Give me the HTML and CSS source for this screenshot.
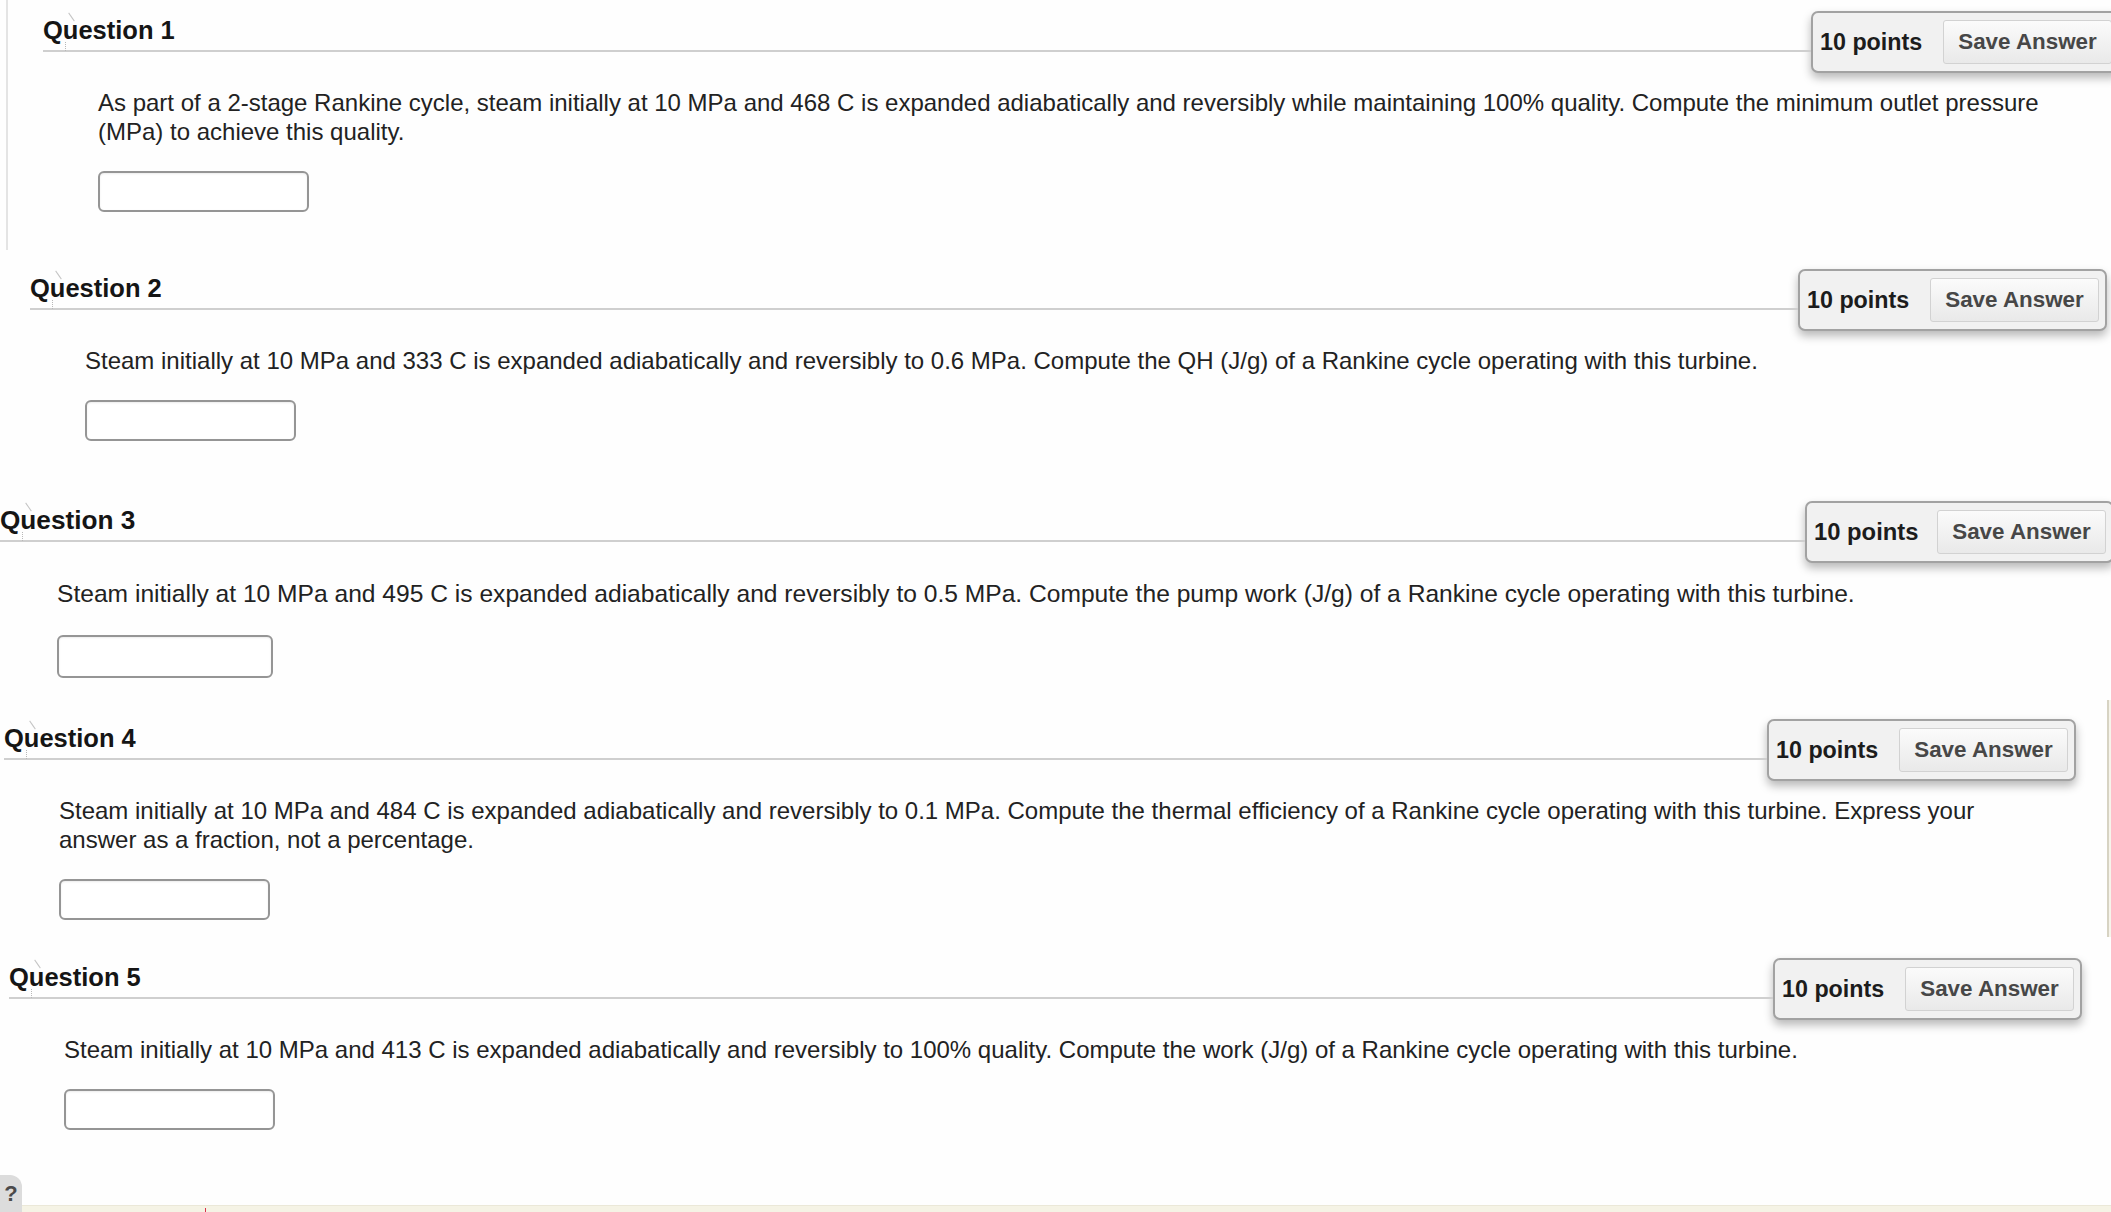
FILE: index.html
```html
<!DOCTYPE html>
<html lang="en">
<head>
<meta charset="utf-8">
<title>Quiz – Rankine cycle</title>
<link rel="stylesheet" href="styles.css">
</head>
<body>
<main class="quiz">
  <section class="question q1">
    <div class="q-head">
      <h3 class="q-title">Question 1</h3>
      <div class="points-box"><span class="points">10 points</span><button class="save" type="button">Save Answer</button></div>
    </div>
    <div class="q-body">
      <p class="q-text">As part of a 2-stage Rankine cycle, steam initially at 10 MPa and 468 C is expanded adiabatically and reversibly while maintaining 100% quality. Compute the minimum outlet pressure (MPa) to achieve this quality.</p>
      <input class="answer" type="text">
    </div>
  </section>

  <section class="question q2">
    <div class="q-head">
      <h3 class="q-title">Question 2</h3>
      <div class="points-box"><span class="points">10 points</span><button class="save" type="button">Save Answer</button></div>
    </div>
    <div class="q-body">
      <p class="q-text">Steam initially at 10 MPa and 333 C is expanded adiabatically and reversibly to 0.6 MPa. Compute the QH (J/g) of a Rankine cycle operating with this turbine.</p>
      <input class="answer" type="text">
    </div>
  </section>

  <section class="question q3">
    <div class="q-head">
      <h3 class="q-title">Question 3</h3>
      <div class="points-box"><span class="points">10 points</span><button class="save" type="button">Save Answer</button></div>
    </div>
    <div class="q-body">
      <p class="q-text">Steam initially at 10 MPa and 495 C is expanded adiabatically and reversibly to 0.5 MPa. Compute the pump work (J/g) of a Rankine cycle operating with this turbine.</p>
      <input class="answer" type="text">
    </div>
  </section>

  <section class="question q4">
    <div class="q-head">
      <h3 class="q-title">Question 4</h3>
      <div class="points-box"><span class="points">10 points</span><button class="save" type="button">Save Answer</button></div>
    </div>
    <div class="q-body">
      <p class="q-text">Steam initially at 10 MPa and 484 C is expanded adiabatically and reversibly to 0.1 MPa. Compute the thermal efficiency of a Rankine cycle operating with this turbine. Express your answer as a fraction, not a percentage.</p>
      <input class="answer" type="text">
    </div>
  </section>

  <section class="question q5">
    <div class="q-head">
      <h3 class="q-title">Question 5</h3>
      <div class="points-box"><span class="points">10 points</span><button class="save" type="button">Save Answer</button></div>
    </div>
    <div class="q-body">
      <p class="q-text">Steam initially at 10 MPa and 413 C is expanded adiabatically and reversibly to 100% quality. Compute the work (J/g) of a Rankine cycle operating with this turbine.</p>
      <input class="answer" type="text">
    </div>
  </section>
</main>

<div class="side-rule"></div>

<footer class="bottom-band"><span class="band-tick"></span></footer>
<div class="help-tab">?</div>
</body>
</html>
```

FILE: styles.css
```css
html, body {
  margin: 0;
  padding: 0;
}

body {
  position: relative;
  min-height: 100vh;
  display: flex;
  flex-direction: column;
  background: #fefefe;
  font-family: "Liberation Sans", Arial, Helvetica, sans-serif;
  color: #222;
  overflow: hidden;
}

.quiz {
  flex: none;
}

.question {
  display: flex;
  flex-direction: column;
}

.q1 {
  margin: 0 -9px 19px 6px;
  padding: 11px 0 38px 35px;
  border-left: 2px solid #e4e4e4;
}
.q2 { margin: 0 4px 60px 30px; }
.q3 { margin: 0 -3px 41px 0; }
.q4 { margin: 0 35px 38px 4px; }
.q5 { margin: 0 29px 0 9px; }

.q-head {
  display: flex;
  align-items: flex-start;
}

.q-title {
  position: relative;
  flex: 1;
  margin: 0;
  height: 39px;
  line-height: 39px;
  font-size: 25.5px;
  font-weight: bold;
  color: #151515;
  border-bottom: 2px solid #cfcfcf;
}

/* faint cursor artifacts seen in the capture */
.q-title::before {
  content: "";
  position: absolute;
  left: 22px;
  top: 31px;
  height: 9px;
  border-left: 1px dotted #b8b8b8;
}
.q-title::after {
  content: "";
  position: absolute;
  left: 28px;
  top: 1px;
  width: 1px;
  height: 10px;
  background: #c4c4c4;
  transform: rotate(-35deg);
}

.points-box {
  flex: none;
  box-sizing: border-box;
  width: 309px;
  height: 62px;
  display: flex;
  align-items: center;
  padding: 0 6px 0 7px;
  background: #f1f1f1;
  border: 2px solid #a2a2a2;
  border-radius: 7px;
  box-shadow: 0 5px 10px rgba(0, 0, 0, 0.28);
}

.points {
  font-size: 23.3px;
  font-weight: bold;
  color: #1c1c1c;
  white-space: nowrap;
}

.save {
  margin-left: auto;
  box-sizing: border-box;
  width: 169px;
  height: 44px;
  padding: 0;
  font-family: "Liberation Sans", Arial, Helvetica, sans-serif;
  font-size: 22.4px;
  font-weight: bold;
  color: #474747;
  background: linear-gradient(#fbfbfb, #e9e9e9);
  border: 1px solid #d2d2d2;
  border-radius: 3px;
}

.q-body {
  margin-top: 15px;
  padding: 0 45px 0 55px;
}

.q-text {
  margin: 0;
  font-size: 24px;
  line-height: 29px;
  color: #222;
}

.answer {
  display: block;
  box-sizing: border-box;
  width: 211px;
  height: 41px;
  margin: 25px 0 0;
  padding: 0;
  background: #fff;
  border: 2px solid #959595;
  border-radius: 6px;
  box-shadow: inset 0 1px 2px rgba(0, 0, 0, 0.08);
}

/* the third capture is slightly larger than the others */
.q3 .q-title { font-size: 26.2px; }
.q3 .points { font-size: 23.8px; }
.q3 .q-body { margin-top: 16px; padding-left: 57px; }
.q3 .q-text { font-size: 24.6px; line-height: 30px; }
.q3 .answer { width: 216px; height: 43px; margin-top: 26px; }

.side-rule {
  position: absolute;
  left: 2107px;
  top: 700px;
  width: 2px;
  height: 237px;
  background: #d7d3c3;
  border-right: 2px solid #f6f4ea;
}

.bottom-band {
  position: relative;
  margin-top: auto;
  height: 6px;
  background: #f5f3e5;
  border-top: 1px solid #ebe8d8;
}

.band-tick {
  position: absolute;
  left: 205px;
  top: 2px;
  width: 1px;
  height: 5px;
  background: #d9324a;
}

.help-tab {
  position: absolute;
  left: 0;
  bottom: 0;
  box-sizing: border-box;
  width: 22px;
  height: 37px;
  padding-top: 8px;
  background: #dcdcdc;
  border-top-right-radius: 12px;
  color: #4a4a4a;
  font-size: 22px;
  font-weight: bold;
  line-height: 1;
  text-align: center;
}
```
